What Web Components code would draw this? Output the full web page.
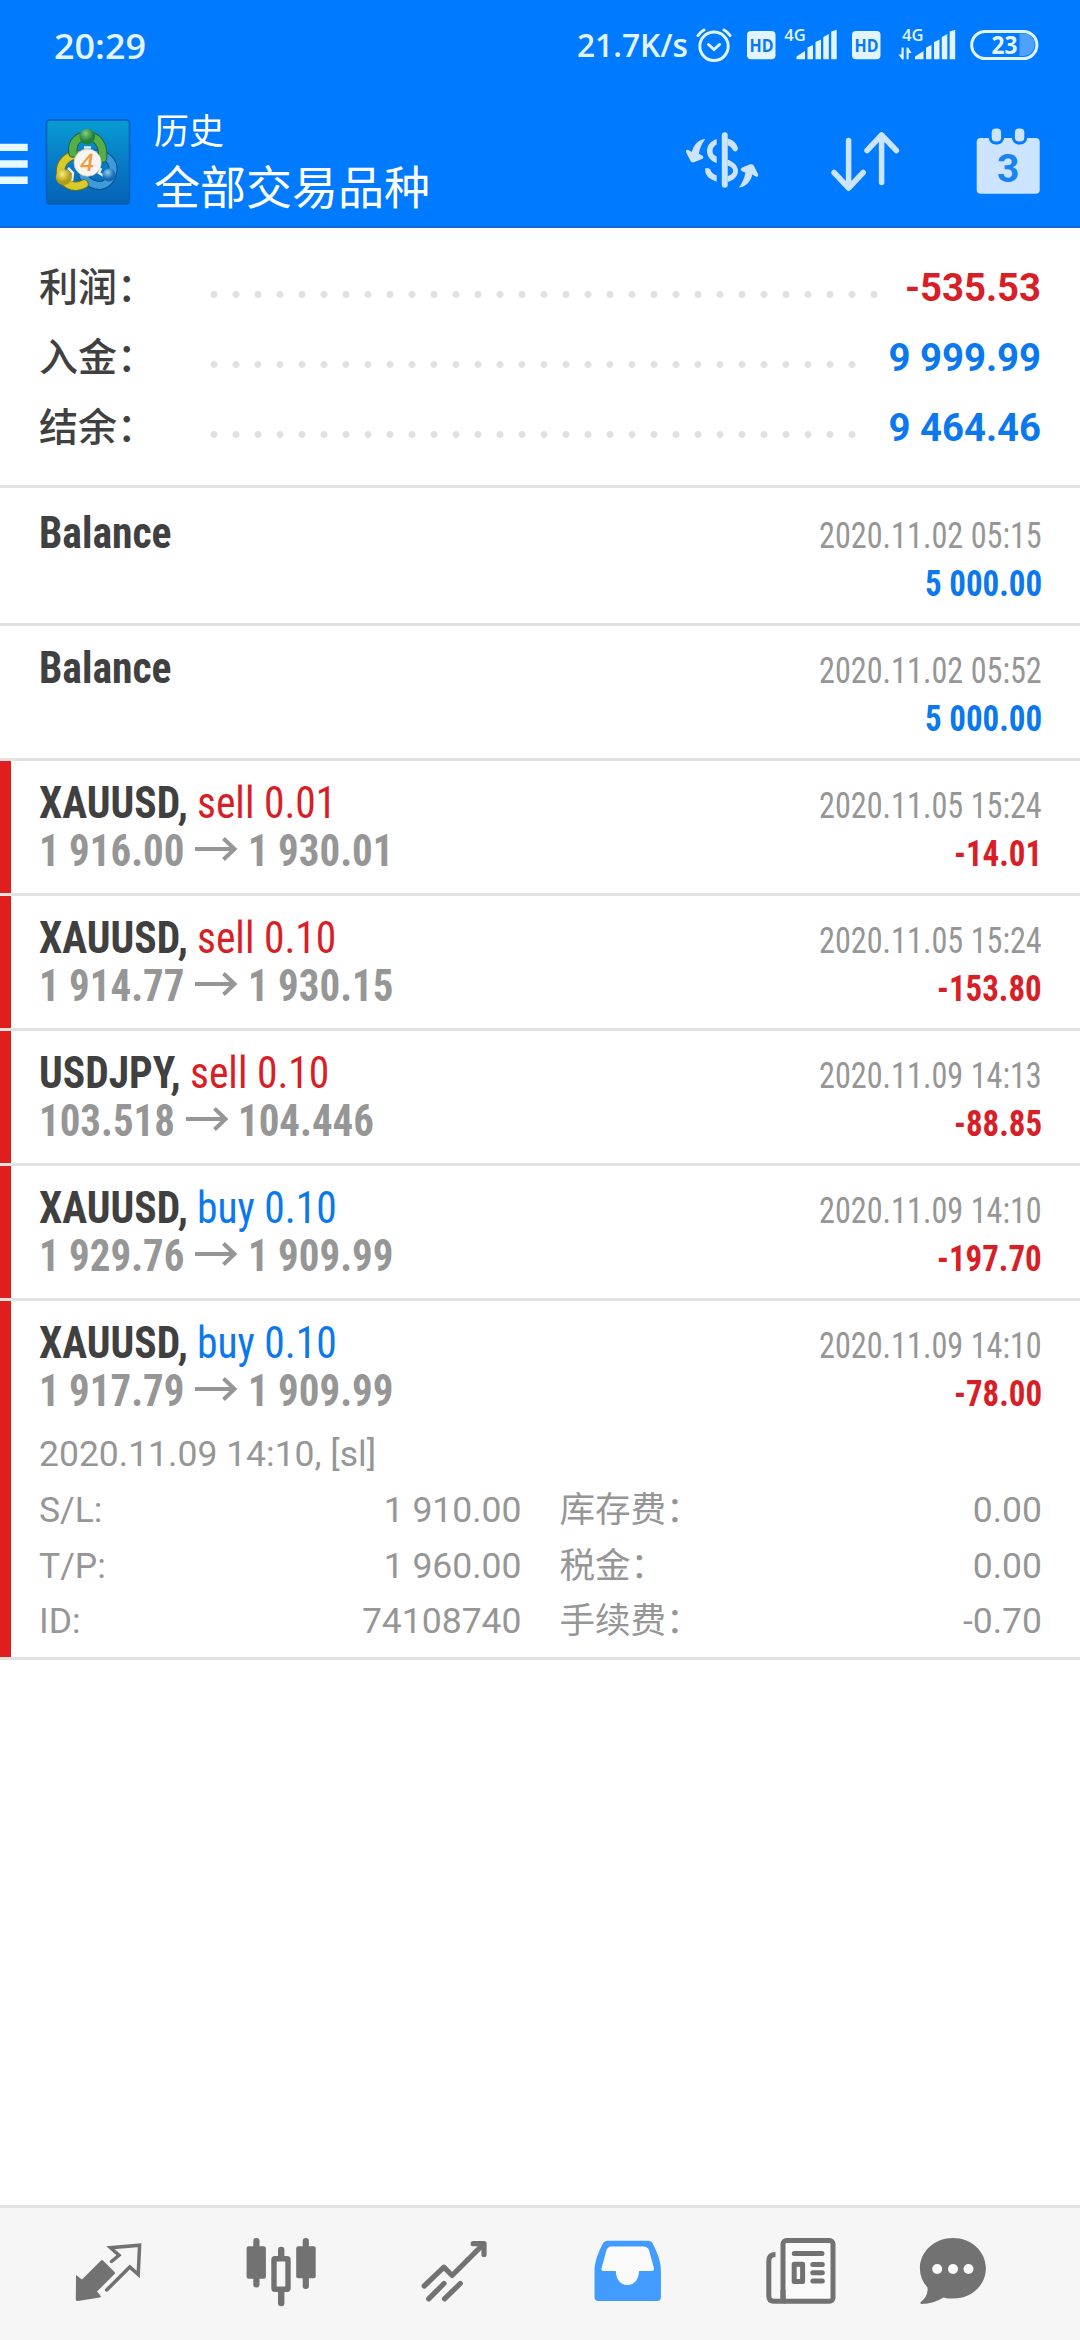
<!DOCTYPE html>
<html lang="zh-CN">
<head>
<meta charset="utf-8">
<title>历史</title>
<style>
body{margin:0;background:#fff;width:1080px;font-family:Roboto,"Noto Sans CJK SC",sans-serif}
</style>
</head>
<body>
<history-screen></history-screen>
<script>
const def=(name,html,setup)=>customElements.define(name,class extends HTMLElement{
  connectedCallback(){
    if(this.shadowRoot)return;
    this.attachShadow({mode:'open'}).innerHTML=typeof html==='function'?html(this):html;
    if(setup)setup(this,this.shadowRoot);
  }
});

/* Text scaled horizontally: w gives the final width, k a factor of the natural width */
def('fit-text',`<style>
:host{display:inline-block;white-space:pre}
span{display:inline-block;transform-origin:0 50%}
</style><span><slot></slot></span>`,(el,root)=>{
  const s=root.querySelector('span'),n=s.getBoundingClientRect().width;
  const w=el.hasAttribute('w')?+el.getAttribute('w'):n*el.getAttribute('k');
  el.style.width=w+'px';
  s.style.width=n+'px';
  s.style.transform=`scaleX(${w/n})`;
});

const bars=(x,down)=>`<svg width="${down?58:53}" height="92" viewBox="${down?897:783.5} 0 ${down?58:53} 92" fill="#e2f4ff">
<text x="${down?901:783.8}" y="41" font-size="17" font-weight="600" font-family="Open Sans" textLength="21.5" lengthAdjust="spacingAndGlyphs">4G</text>
<g transform="translate(${x} 0)"><path d="M0 59.3V56.5L8.5 51V59.3ZM11 59.3V47.5L16.5 45V59.3ZM19 59.3V42L24.5 39.5V59.3ZM26.8 59.3V37L32.3 34V59.3ZM34.7 59.3V31.5L40.2 29.8V59.3Z"/></g>
${down?'<path d="M900.5 47.500h2.200v12h-1.500l-3.700-5h3ZM905.500 59.300h2.200V53h3l-3.700-5.500h-1.500Z"/>':''}</svg>`;
const hd=`<svg width="29" height="92" viewBox="0 0 29 92"><rect y="31" width="28.500" height="28.300" rx="4" fill="#e2f4ff"/><text x="2.600" y="52.300" font-size="18.500" font-weight="700" font-family="Open Sans" fill="#0a78f4" textLength="24" lengthAdjust="spacingAndGlyphs">HD</text></svg>`;

def('status-bar',`<style>
:host{display:flex;height:92px;box-sizing:border-box;padding:0 41px 0 54px;align-items:center;justify-content:space-between;color:#e2f4ff;font-family:"Open Sans",sans-serif;font-weight:600}
.t{font-size:35px;line-height:91px;height:92px}.s{font-size:33px;line-height:90px;height:92px;margin-right:8px}
.r{display:flex;align-items:center}svg{display:block}
</style><fit-text class="t" w="92">20:29</fit-text>
<div class="r"><fit-text class="s" w="111">21.7K/s</fit-text>
<svg width="36" height="92" viewBox="695 0 36 92" fill="none" stroke="#e2f4ff" stroke-width="3" stroke-linecap="round" style="margin-right:15px"><circle cx="713" cy="46.300" r="14.200"/><path d="M707.500 44.500l5.500 5 5.500-5M697 35.500q2-3.500 6-5.500M729 35.500q-2-3.500-6-5.500"/></svg>
${hd}<div style="width:8.500px"></div>${bars(796)}<div style="width:15px"></div>${hd}<div style="width:16.500px"></div>${bars(914,1)}
<svg width="69" height="92" viewBox="969.500 0 69 92" style="margin-left:14.500px"><rect x="971.200" y="31.400" width="65.200" height="27.200" rx="13.600" fill="none" stroke="#e2f4ff" stroke-width="3"/><path d="M1019 33.500h4a11.200 11.200 0 0 1 0 22.400h-4Z" fill="#4da2ff"/><text x="991" y="54.300" font-size="25" font-weight="700" font-family="Open Sans" fill="#e2f4ff" textLength="26" lengthAdjust="spacingAndGlyphs">23</text></svg>
</div>`);

def('app-header',`<style>
:host{display:flex;height:136px;box-sizing:border-box;border-bottom:2px solid #0d68d4;color:#fff;font-family:"Noto Sans CJK SC",sans-serif}
svg{display:block;flex:none}.names{flex:1;padding-left:18px}
.a{font-size:35px;line-height:40px;margin-top:17px}.b{font-size:46px;line-height:56px;margin-top:7px}
</style>
<svg width="136" height="134" viewBox="0 92 136 134">
<defs><linearGradient id="bg" x2="0" y2="1"><stop stop-color="#089bd3"/><stop offset=".45" stop-color="#087fc8"/><stop offset="1" stop-color="#0562b4"/></linearGradient>
<radialGradient id="g" cx=".4" cy=".3"><stop stop-color="#7fd07a"/><stop offset="1" stop-color="#23803a"/></radialGradient>
<radialGradient id="y" cx=".4" cy=".3"><stop stop-color="#f6ef7a"/><stop offset="1" stop-color="#b49a14"/></radialGradient>
<radialGradient id="b" cx=".4" cy=".3"><stop stop-color="#8ad0f5"/><stop offset="1" stop-color="#1769b0"/></radialGradient></defs>
<path d="M0 143.700h27.700v7.300H0ZM0 160.200h27.700v7.600H0ZM0 176.500h27.700v7.500H0Z" fill="#e6f9ff"/>
<rect x="46.500" y="120" width="83" height="84" rx="3" fill="url(#bg)" stroke="#0a5cb4" stroke-width="1.500"/>
<g fill="none" stroke-linecap="round">
<path d="M96 154C108 154 114 163 113 171 111 183 103 187 96 185 91 184 86 180 83 176" stroke="#0c4d86" stroke-width="9"/><path d="M96 154C108 154 114 163 113 171 111 183 103 187 96 185 91 184 86 180 83 176" stroke="#3b9bdc" stroke-width="7"/>
<path d="M77 155C68 155 60 163 60.500 172 62 183 73 190 84 184" stroke="#68701c" stroke-width="9.500"/><path d="M77 155C68 155 60 163 60.500 172 62 183 73 190 84 184" stroke="#d8ca2c" stroke-width="7.500"/>
<path d="M73 153C71.500 142 78 136 87.500 136S104 145 102.500 158" stroke="#1d6440" stroke-width="9.500"/><path d="M73 153C71.500 142 78 136 87.500 136S104 145 102.500 158" stroke="#56ae46" stroke-width="7.500"/></g>
<path d="M68 168l5 5-1 8M101 168l-2 5 5 3M84 147.500h7" stroke="#e9eee0" stroke-width="2.500" fill="none"/>
<circle cx="87.300" cy="136.500" r="7.800" fill="url(#g)"/><circle cx="63.800" cy="177.200" r="8" fill="url(#y)"/><circle cx="109" cy="175" r="6.500" fill="url(#b)"/>
<circle cx="87.600" cy="162.700" r="13.600" fill="#f8f4f4" stroke="#c9c9b6" stroke-width=".8"/>
<text x="80.500" y="171" font-family="Open Sans" font-size="24" font-weight="600" fill="#f29a3a" transform="translate(87 163) skewX(-8) translate(-87 -163)">4</text>
</svg>
<div class="names"><div class="a">历史</div><div class="b">全部交易品种</div></div>
<svg width="144" height="134" viewBox="650 92 144 134" fill="#cce4ff"><path id="arp" d="M705.300 139C697 140 693.500 146 691.800 152L688 149.800Q685.500 149.300 686 152L690.500 161Q691.500 162.800 694 162.300L702 159Q704.500 157.500 702.500 155.700L698.800 153.800C700 148 702 143 705.300 139Z"/><use href="#arp" transform="rotate(180 722.100 163.300)"/>
<rect x="721.800" y="132.300" width="5.900" height="55.400" rx="2.900"/>
<path d="M716.700 139V144.600Q712.500 147 712.500 151T716.700 156.500V163C711 161 707 157 707 151S711 141 716.700 139ZM716.700 181.700V175.500Q711.500 173.500 710.300 169.500 708.500 167 705 168.500 704.500 178 716.700 181.700ZM727.500 138.500C734 140 737 144 738 148.500 737.500 152.500 733.500 152 732.800 149.800Q731 146.500 727.500 145ZM727.500 159.500C734 162 738 166 738 171S734 180.500 727.500 182V176C735 174.500 735 167.500 727.500 165.500Z"/></svg>
<svg width="144" height="134" viewBox="794 92 144 134" fill="none" stroke="#cce4ff" stroke-width="5.500" stroke-linecap="round" stroke-linejoin="round"><path d="M848.600 140.500V188M834 172.500L848.600 188 863.200 172.500M881.600 182.500V135M867 150.500L881.600 135 896.400 150.500"/></svg>
<svg width="142" height="134" viewBox="938 92 142 134" fill="#cce4ff"><rect x="976.700" y="138" width="63" height="55.700" rx="4"/><g stroke="#007aff" stroke-width="3"><rect x="990.200" y="127" width="12.400" height="16" rx="5.500"/><rect x="1013.400" y="127" width="12.400" height="16" rx="5.500"/></g><text x="1008.300" y="181.500" text-anchor="middle" font-family="Roboto" font-weight="700" font-size="39" fill="#1a82f2">3</text></svg>`);

def('summary-row',el=>`<style>
:host{display:flex;height:70px;line-height:70px;font-size:39px;font-weight:500;color:#404040}
.l{width:170.500px}.d{height:7px;margin-top:38px;width:${el.getAttribute('dots')*22}px;background:radial-gradient(circle at 4px 3.500px,#e1e1e1 3px,transparent 3.900px) 0 0/22px 7px}
.v{margin-left:auto;font-size:38.300px;font-weight:700;color:var(--${el.getAttribute('tone')})}
</style><div class="l">${el.getAttribute('label')}</div><div class="d"></div><div class="v"><slot></slot></div>`);

def('deal-row',el=>{const a=n=>el.getAttribute(n);return `<style>
:host{display:flex;flex-direction:column;border-bottom:3px solid #e2e2e2;min-height:132px}
.box{flex:1;box-sizing:border-box;border-left:11px solid ${a('open')?'#e01e1e':'transparent'};padding:18px 38px 0 28px}
.top{display:flex;justify-content:space-between}
.cond{font-family:"Roboto Condensed",Roboto,sans-serif;font-stretch:75%}
.l{font-size:44px;line-height:48px;color:#404040;font-weight:700}
.n,.p{display:flex;align-items:center;height:48px}
.k{font-weight:400;color:var(--${a('kind')==='buy'?'blue':'red'})}
.p{color:#969696}
.r{font-size:36px;line-height:48px;padding-top:3px;color:#969696}
.r div{display:flex;justify-content:flex-end;height:48px}
.m{font-weight:700;color:var(--${a('tone')})}
svg{display:block;margin:0 9.500px 4px 11px}
</style><div class="box"><div class="top cond"><div class="l"><div class="n"><fit-text k=".945">${a('name')}${a('kind')?', ':''}</fit-text>${a('kind')?`<fit-text class="k" k=".943">${a('kind')} ${a('lot')}</fit-text>`:''}</div>${a('open')?`<div class="p"><fit-text k=".93">${a('open')}</fit-text><svg width="43" height="24" viewBox="0 0 43 24" fill="none" stroke="#969696" stroke-width="4"><path d="M0 12H39.500M28.500 1.500L39.500 12 28.500 22.500"/></svg><fit-text k=".93">${a('close')}</fit-text></div>`:''}</div>
<div class="r"><div><fit-text k=".895">${a('date')}</fit-text></div><div class="m"><fit-text k=".915">${a('amount')}</fit-text></div></div></div><slot></slot></div>`});

def('deal-details',`<style>
:host{display:block;box-sizing:border-box;font-size:35.500px;color:#969696;line-height:56px;padding-top:8px;height:239px}
.g{display:grid;grid-template-columns:1fr 1fr;column-gap:38px;grid-auto-rows:55.500px;line-height:56px}
.g div{display:flex;justify-content:space-between}
</style><div>2020.11.09 14:10, [sl]</div><div class="g">
<div><span>S/L:</span><span>1 910.00</span></div><div><span>库存费：</span><span>0.00</span></div>
<div><span>T/P:</span><span>1 960.00</span></div><div><span>税金：</span><span>0.00</span></div>
<div><span>ID:</span><span>74108740</span></div><div><span>手续费：</span><span>-0.70</span></div></div>`);

const tab=(i,c)=>`<svg width="173" height="132" viewBox="${22+173*i} 2208 173 132">${c}</svg>`;
def('tab-bar',`<style>:host{display:flex;height:132px;padding-left:22px;border-top:3px solid #e2e2e2;background:#f6f6f6}svg{display:block;flex:none;fill:#727272}.o{fill:none;stroke:#727272;stroke-linecap:round;stroke-linejoin:round}</style>
${tab(0,'<path d="M76 2275l6 4.500 19-19q1-1 2 0l11.500 11.500q1 1 0 2L97 2291.500l3.800 4.500q.5 1-1 1.500l-22 3.500q-2 .3-2-1.500Z"/><path class="o" stroke-width="3.500" style="stroke-linejoin:miter" d="M111.500 2261.500L119 2255.300 110.500 2247.700 139.600 2245.200 138.200 2274.500 129.800 2267 106.700 2290"/>')}
${tab(1,'<rect x="246.600" y="2246.300" width="19.300" height="32.500" rx="2"/><rect x="253.300" y="2238" width="6.200" height="49.500" rx="3"/><rect x="296.200" y="2246.300" width="19.500" height="32" rx="2"/><rect x="302.700" y="2238" width="6.200" height="51" rx="3"/><rect x="278" y="2246.700" width="6.400" height="59.500" rx="3"/><rect x="274" y="2258.700" width="14" height="30.600" rx="1" stroke="#727272" stroke-width="5.400" style="fill:#f6f6f6"/>')}
${tab(2,'<path class="o" stroke-width="5.200" d="M424.200 2286L443.900 2267.200 452.100 2275.500 484 2243.700M473.200 2243.700H484V2254.500M428.700 2298.800L444 2283.500M444.500 2298.800L460.300 2283.500"/>')}
${tab(3,'<path style="fill:#429bff" d="M608 2240.800H648Q651.500 2240.800 653 2244C658 2254 660.900 2262 660.900 2271V2297Q660.900 2301 656.900 2301H598.500Q594.500 2301 594.500 2297V2271C594.500 2262 598 2253 602.500 2244Q604.500 2240.800 608 2240.800Z"/><path style="fill:#fafafa" d="M611 2246.500H643.500Q647.500 2246.500 649 2250L654 2268.500Q654 2271 652 2271H639C639 2279 634.500 2285 627.400 2285S616 2279 615.800 2271H603.500Q601 2271 601.500 2268.500L606.500 2250Q608 2246.500 611 2246.500Z"/>')}
${tab(4,'<rect style="fill:#fafafa" stroke="#727272" stroke-width="5" x="783" y="2240.500" width="50" height="60.800" rx="3.500"/><path class="o" stroke-width="5" style="stroke-linecap:butt" d="M775.500 2254.500Q768.800 2254.500 768.800 2261V2296Q768.800 2301.300 774 2301.300H786M783 2290V2300"/><path class="o" stroke-width="5" d="M794.300 2253.500H822M812.800 2264.500H822.300M812.800 2272.700H822.300M812.800 2281H822.300M794.200 2264.200H802.600V2281.500H794.200Z"/>')}
${tab(5,'<path d="M953 2237.900C971 2237.900 985.900 2251 985.900 2268.300S971 2298.600 953 2298.600Q948 2298.600 943.500 2297.400 934 2303.500 921.500 2303.900 919.500 2303.500 920.800 2302 928.500 2296 927.500 2287.500 920 2279.500 919.900 2268.300C919.900 2251 935 2237.900 953 2237.900Z"/><g style="fill:#fafafa"><circle cx="937.200" cy="2269" r="5"/><circle cx="953" cy="2269" r="5"/><circle cx="968.500" cy="2269" r="5"/></g>')}`);

def('history-screen',`<style>
:host{display:flex;flex-direction:column;height:2340px;--red:#d81e26;--blue:#0b78ee}
.blue{background:#007aff}.sum{padding:25px 39px 22px;border-bottom:3px solid #e2e2e2}
.first{padding-top:3px}tab-bar{margin-top:auto}
</style>
<div class="blue"><status-bar></status-bar><app-header></app-header></div>
<div class="sum"><summary-row label="利润：" dots="31" tone="red">-535.53</summary-row><summary-row label="入金：" dots="30" tone="blue">9 999.99</summary-row><summary-row label="结余：" dots="30" tone="blue">9 464.46</summary-row></div>
<deal-row class="first" name="Balance" date="2020.11.02 05:15" amount="5 000.00" tone="blue"></deal-row>
<deal-row name="Balance" date="2020.11.02 05:52" amount="5 000.00" tone="blue"></deal-row>
<deal-row name="XAUUSD" kind="sell" lot="0.01" open="1 916.00" close="1 930.01" date="2020.11.05 15:24" amount="-14.01" tone="red"></deal-row>
<deal-row name="XAUUSD" kind="sell" lot="0.10" open="1 914.77" close="1 930.15" date="2020.11.05 15:24" amount="-153.80" tone="red"></deal-row>
<deal-row name="USDJPY" kind="sell" lot="0.10" open="103.518" close="104.446" date="2020.11.09 14:13" amount="-88.85" tone="red"></deal-row>
<deal-row name="XAUUSD" kind="buy" lot="0.10" open="1 929.76" close="1 909.99" date="2020.11.09 14:10" amount="-197.70" tone="red"></deal-row>
<deal-row name="XAUUSD" kind="buy" lot="0.10" open="1 917.79" close="1 909.99" date="2020.11.09 14:10" amount="-78.00" tone="red"><deal-details></deal-details></deal-row>
<tab-bar></tab-bar>`);
</script>
</body>
</html>
